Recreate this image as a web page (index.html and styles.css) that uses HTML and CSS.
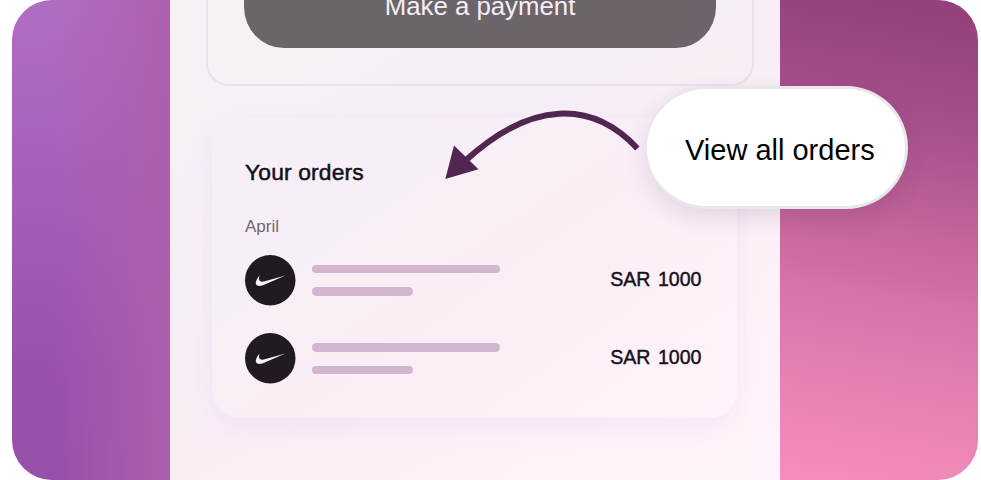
FILE: index.html
```html
<!DOCTYPE html>
<html lang="en">
<head>
<meta charset="utf-8">
<title>Your orders</title>
<link rel="stylesheet" href="styles.css">
</head>
<body>
<main class="stage">
  <div class="backdrop-left"></div>
  <section class="phone">
    <div class="payment-box">
      <div class="payment-button"><span>Make a payment</span></div>
    </div>
    <div class="orders-card">
      <h2 class="title">Your orders</h2>
      <p class="month">April</p>
      <div class="order">
        <svg class="logo" viewBox="0 0 50 50"><circle cx="25" cy="25" r="25"/><path d="M40 20.2 L18.4 29.7 Q12.2 32.2 10.8 28.8 Q10 25.6 14.4 20.4 C13.2 24.4 13.8 27.6 19.6 26 Z"/></svg>
        <div class="lines"><i class="line long"></i><i class="line short"></i></div>
        <span class="amount">SAR 1000</span>
      </div>
      <div class="order">
        <svg class="logo" viewBox="0 0 50 50"><circle cx="25" cy="25" r="25"/><path d="M40 20.2 L18.4 29.7 Q12.2 32.2 10.8 28.8 Q10 25.6 14.4 20.4 C13.2 24.4 13.8 27.6 19.6 26 Z"/></svg>
        <div class="lines"><i class="line long"></i><i class="line short"></i></div>
        <span class="amount">SAR 1000</span>
      </div>
    </div>
  </section>
  <div class="backdrop-right"></div>
</main>
<svg class="arrow" viewBox="0 0 220 95"><path class="curve" d="M207.4 53.5 C162 4.5 101 5.5 35 66"/><path class="head" d="M15.3 84 L24 50.5 L48.5 74.3 Z"/></svg>
<div class="callout"><span>View all orders</span></div>
</body>
</html>
```
FILE: styles.css
```css
* { box-sizing: border-box; }
body {
  margin: 0;
  width: 981px;
  height: 480px;
  overflow: hidden;
  position: relative;
  background: #fff;
  font-family: "Liberation Sans", Arial, sans-serif;
}
.stage {
  display: grid;
  grid-template-columns: 158px 609.5px 198.5px;
  width: 966px;
  height: 480px;
  margin-left: 12px;
  border-radius: 40px;
  overflow: hidden;
}
.backdrop-left {
  background:
    linear-gradient(90deg, rgba(173, 95, 172, 0) 25%, #ad5fac 100%),
    linear-gradient(180deg, #b06ec2 0%, #a662bb 32%, #a05bb6 52%, #9851ad 78%, #9650aa 100%);
}
.backdrop-right {
  background: linear-gradient(190deg, #94417c 4%, #a8518c 27%, #c3649a 47%, #d874aa 63%, #e681b2 80%, #f58cbb 98%);
}
.phone {
  display: flex;
  flex-direction: column;
  background: linear-gradient(150deg, #f6f1f7 0%, #f6eef6 38%, #faeef6 58%, #fdf2f9 80%, #fff4f9 100%);
}
.payment-box {
  flex: none;
  width: 548px;
  height: 86px;
  margin-left: 36px;
  padding: 0 37px;
  border: 1.5px solid #e9e1e9;
  border-width: 0 2px 2px;
  border-radius: 0 0 23px 23px;
}
.payment-button {
  display: flex;
  justify-content: center;
  align-items: flex-end;
  width: 472px;
  height: 48px;
  margin-left: -1px;
  padding-bottom: 27px;
  border-radius: 0 0 40px 40px / 0 0 41px 41px;
  background: linear-gradient(165deg, #6b656b 40%, #6e636a);
  color: #f6eef6;
  font-size: 25.8px;
  line-height: 30px;
  white-space: nowrap;
}
.orders-card {
  flex: none;
  width: 525.5px;
  height: 299.5px;
  margin: 32px 0 0 41.5px;
  padding: 40px 35.5px 0 33.5px;
  border-radius: 28px;
  background: linear-gradient(145deg, #f6eff7 0%, #f7eff7 30%, #faeef6 52%, #fdf2f9 82%, #fef3fa 100%);
  box-shadow: 0 10px 24px rgba(209, 184, 248, .2);
}
.title {
  margin: 0;
  color: #151017;
  font-size: 22.8px;
  font-weight: 400;
  line-height: 28px;
  letter-spacing: .17px;
  -webkit-text-stroke: .5px #151017;
}
.month {
  margin: 29.5px 0 17px;
  color: #706871;
  font-size: 17px;
  line-height: 22px;
}
.order {
  display: flex;
  align-items: center;
  height: 50.5px;
  margin-bottom: 28px;
}
.logo {
  width: 50.5px;
  height: 50.5px;
  margin-right: 16.5px;
  fill: #221a22;
  overflow: visible;
}
.logo path { fill: #f8f1f8; }
.lines {
  display: grid;
  gap: 14px;
  margin-top: 1px;
}
.line {
  display: block;
  height: 8.5px;
  border-radius: 5px;
  background: #d2b5cf;
}
.long { width: 188px; }
.short { width: 101px; }
.amount {
  margin: -1px 0 0 auto;
  color: #18111a;
  font-size: 19.6px;
  word-spacing: 2px;
  -webkit-text-stroke: .45px #18111a;
  white-space: nowrap;
}
.arrow {
  position: absolute;
  left: 430px;
  top: 95px;
  width: 220px;
  height: 95px;
}
.curve { fill: none; stroke: #522650; stroke-width: 6; }
.head { fill: #522650; }
.callout {
  position: absolute;
  left: 645px;
  top: 86px;
  width: 263px;
  height: 123px;
  display: flex;
  align-items: center;
  padding: 6px 0 0 37px;
  border: 3px solid #e8e8e8;
  border-left-width: 2px;
  padding-left: 38px;
  border-radius: 62px;
  background: #fff;
  box-shadow: 0 9px 22px rgba(65, 35, 80, .12);
  font-size: 29px;
  white-space: nowrap;
}
```
